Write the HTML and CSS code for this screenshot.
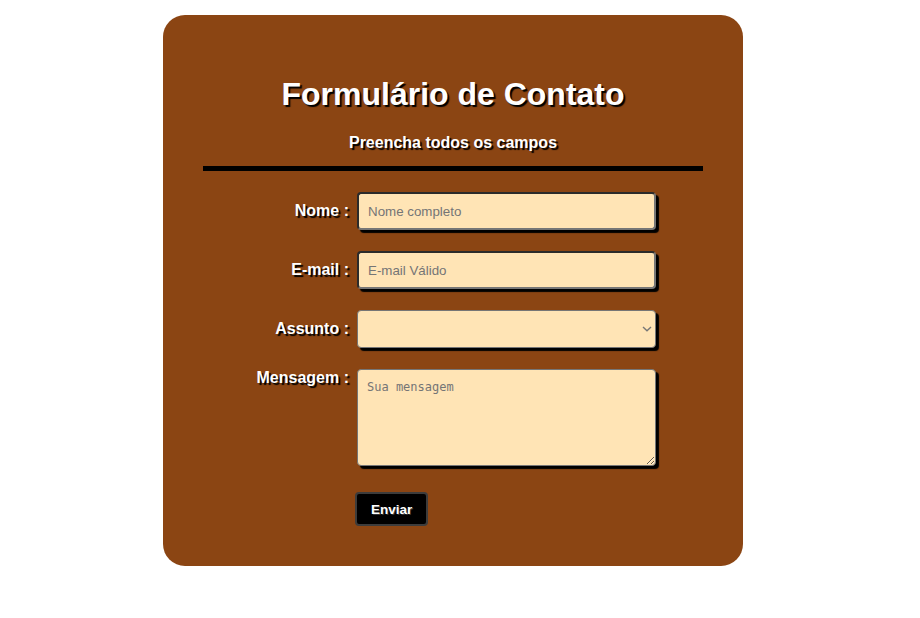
FILE: index.html
```html
<!DOCTYPE html>
<html lang="pt">
<head>
<meta charset="utf-8">
<title>Formulário de Contato</title>
<link rel="stylesheet" href="styles.css">
</head>
<body>
<div class="card">
  <h1 class="title">Formulário de Contato</h1>
  <p class="subtitle">Preencha todos os campos</p>
  <div class="rule"></div>
  <form class="form">
    <label class="label" for="nome">Nome :</label>
    <input class="field" id="nome" type="text" placeholder="Nome completo">
    <label class="label" for="email">E-mail :</label>
    <input class="field" id="email" type="email" placeholder="E-mail Válido">
    <label class="label" for="assunto">Assunto :</label>
    <div class="select-wrap">
      <select class="select" id="assunto"><option></option></select>
      <svg class="chevron" width="10" height="6" viewBox="0 0 10 6" aria-hidden="true"><path d="M1 1 L5 4.8 L9 1" fill="none" stroke="#777777" stroke-width="1.4"/></svg>
    </div>
    <label class="label label-top" for="msg">Mensagem :</label>
    <textarea class="area" id="msg" placeholder="Sua mensagem"></textarea>
    <div class="actions"><button class="btn" type="button">Enviar</button></div>
  </form>
</div>
</body>
</html>
```

FILE: styles.css
```css
html, body {
  margin: 0;
  padding: 0;
  background: #ffffff;
}
body {
  font-family: "Liberation Sans", Arial, sans-serif;
}
.card {
  box-sizing: border-box;
  width: 580px;
  margin: 15px 0 0 163px;
  padding: 40px;
  background: #8b4513;
  border-radius: 22px;
}
.title {
  margin: 21px 0 21px;
  font-size: 32px;
  line-height: 37px;
  font-weight: bold;
  color: #ffffff;
  text-align: center;
  text-shadow: 2px 2px 1px #000000;
}
.subtitle {
  margin: 0;
  font-size: 16px;
  line-height: 18px;
  font-weight: bold;
  color: #ffffff;
  text-align: center;
  text-shadow: 2px 2px 1px #000000;
}
.rule {
  height: 5px;
  margin-top: 14px;
  background: #000000;
}
.form {
  display: grid;
  grid-template-columns: 146px 299px;
  column-gap: 8px;
  row-gap: 21px;
  margin-top: 21px;
  align-items: center;
}
.label {
  justify-self: end;
  font-size: 16px;
  line-height: 18px;
  font-weight: bold;
  color: #ffffff;
  text-shadow: 2px 2px 1px #000000;
}
.label-top {
  align-self: start;
}
.field {
  box-sizing: border-box;
  width: 299px;
  height: 38px;
  margin: 0;
  padding: 0 9px;
  border-width: 2px;
  border-style: solid;
  border-color: #2b2b2b #767676 #767676 #2b2b2b;
  border-radius: 4px;
  background: #ffe4b5;
  box-shadow: 3px 3px 1px #000000;
  font-family: "Liberation Sans", Arial, sans-serif;
  font-size: 13.33px;
  color: #000000;
  outline: none;
}
.field::placeholder {
  color: #757575;
}
.select-wrap {
  position: relative;
  width: 299px;
  height: 38px;
}
.select {
  display: block;
  box-sizing: border-box;
  width: 299px;
  height: 38px;
  margin: 0;
  padding: 0 24px 0 9px;
  border: 1px solid #767676;
  border-radius: 4px;
  background-color: #ffe4b5;
  box-shadow: 3px 3px 1px #000000;
  font-family: "Liberation Sans", Arial, sans-serif;
  font-size: 13.33px;
  -webkit-appearance: none;
  appearance: none;
  outline: none;
}
.chevron {
  position: absolute;
  left: 285px;
  top: 16px;
  pointer-events: none;
}
.area {
  box-sizing: border-box;
  width: 299px;
  height: 97px;
  margin: 0;
  padding: 10px 9px;
  border: 1px solid #767676;
  border-radius: 4px;
  background: #ffe4b5;
  box-shadow: 3px 3px 1px #000000;
  font-family: "DejaVu Sans Mono", monospace;
  font-size: 12px;
  line-height: 14px;
}
.area::placeholder {
  color: #757575;
}
.actions {
  grid-column: 2;
  margin-top: 5px;
  margin-left: -2px;
}
.btn {
  box-sizing: border-box;
  height: 34px;
  padding: 0 14px;
  border: 2px solid #3c3c3c;
  border-radius: 4px;
  background: #000000;
  color: #ffffff;
  font-family: "Liberation Sans", Arial, sans-serif;
  font-size: 13.5px;
  font-weight: bold;
  text-shadow: 1px 1px 0 #333333;
}
```
